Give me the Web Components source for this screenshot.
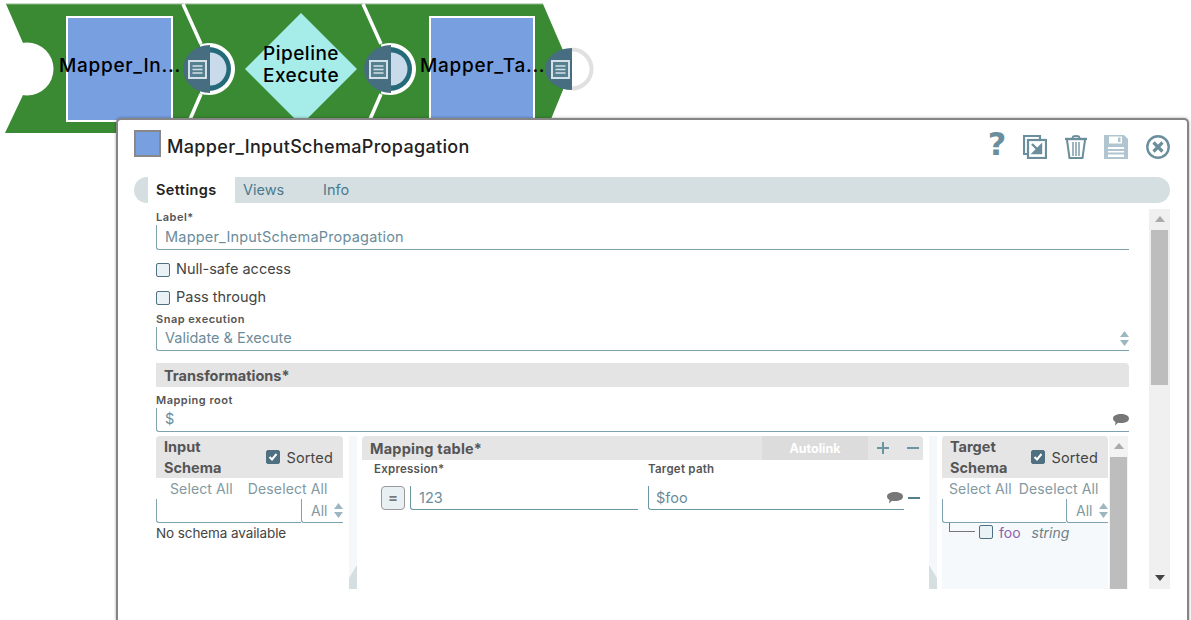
<!DOCTYPE html>
<html>
<head>
<meta charset="utf-8">
<style>
    html, body { margin: 0; padding: 0; height: 620px; overflow: hidden; background: #fff; }
    body { font-family: Inter, "Liberation Sans", sans-serif; position: relative; }
</style>
</head>
<body>
<pipeline-canvas></pipeline-canvas>
<snap-dialog title-text="Mapper_InputSchemaPropagation">
    <form-field label="Label*" value="Mapper_InputSchemaPropagation" style="--control-h:25px;--value-ls:.2px"></form-field>
    <check-row style="margin-top:5px">Null-safe access</check-row>
    <check-row>Pass through</check-row>
    <form-field label="Snap execution" value="Validate &amp; Execute" kind="select"></form-field>
    <section-bar>Transformations*</section-bar>
    <form-field label="Mapping root" value="$" kind="comment" style="--field-mt:5px"></form-field>
    <mapping-area>
        <schema-panel slot="input" name="Input Schema" filter-w="145">
            <div style="font-size:13.5px;color:#444;line-height:20px;letter-spacing:-.1px">No schema available</div>
        </schema-panel>
        <mapping-table slot="table"></mapping-table>
        <schema-panel slot="target" name="Target Schema" filter-w="124" tinted>
            <schema-leaf name="foo" type="string"></schema-leaf>
        </schema-panel>
    </mapping-area>
</snap-dialog>

<script>
const docIcon = (x, y) => `
    <rect x="${x}" y="${y}" width="17" height="17" fill="#55808f" stroke="#d3e0e8" stroke-width="2"/>
    <path d="M${x + 3.5} ${y + 5}h10M${x + 3.5} ${y + 8.5}h10M${x + 3.5} ${y + 12}h10" stroke="#d3e0e8" stroke-width="1.4"/>`;

class PipelineCanvas extends HTMLElement {
    constructor() {
        super();
        this.shadowDOM = this.attachShadow({mode: 'open'});
    }

    connectedCallback() {
        this.shadowDOM.innerHTML = `
            <style>
                :host { display: block; position: absolute; left: 0; top: 0; width: 620px; height: 140px; }
                svg { position: absolute; left: 0; top: 0; }
                .label {
                    position: absolute;
                    color: #000;
                    font-size: 19px;
                    font-weight: 500;
                    line-height: 22px;
                    white-space: nowrap;
                    text-align: center;
                }
            </style>
            <svg width="620" height="140" viewBox="0 0 620 140">
                <path d="M6 4H543L565 55V85L549 124L540 133H5L23 95V43Z" fill="#398a33"/>
                <path d="M6 4H543" stroke="#8fb88c" stroke-width="1"/>
                <circle cx="27" cy="69" r="26.5" fill="#fff"/>
                <path d="M183 4L201 44M201 94L188 124" stroke="#fff" stroke-width="3.5" fill="none"/>
                <path d="M363 4L381 44M381 94L368 124" stroke="#fff" stroke-width="3.5" fill="none"/>

                <rect x="67" y="17" width="105" height="104" fill="#789fe0" stroke="#fff" stroke-width="2"/>
                <rect x="430" y="17" width="104" height="116" fill="#789fe0" stroke="#fff" stroke-width="2"/>
                <path d="M301 13L357 69L301 125L245 69Z" fill="#a6ece8"/>

                <path d="M200 44.600A26 26 0 1 1 200 93.400Z" fill="#fff"/>
                <path d="M209 47A22 22 0 0 1 209 91Z" fill="#256a7a"/>
                <path d="M210 52.500A16.500 16.500 0 0 1 210 85.500Z" fill="#c9dbea"/>
                <path d="M210 45A27 24 0 0 0 210 93Z" fill="#466e80"/>
                ${docIcon(189, 61)}

                <path d="M381 44.600A26 26 0 1 1 381 93.400Z" fill="#fff"/>
                <path d="M390 47A22 22 0 0 1 390 91Z" fill="#256a7a"/>
                <path d="M391 52.500A16.500 16.500 0 0 1 391 85.500Z" fill="#c9dbea"/>
                <path d="M391 45A27 24 0 0 0 391 93Z" fill="#466e80"/>
                ${docIcon(370, 61)}

                <path d="M572 49.500A19.500 19.500 0 0 1 572 88.500" fill="none" stroke="#e0e0e0" stroke-width="4"/>
                <path d="M572 48A27 21 0 0 0 572 90Z" fill="#466e80"/>
                ${docIcon(552, 61)}
            </svg>
            <div class="label" style="left:59px;top:55px;letter-spacing:.7px">Mapper_In...</div>
            <div class="label" style="left:245px;top:43px;width:112px;letter-spacing:.5px">Pipeline<br>Execute</div>
            <div class="label" style="left:420px;top:55px;letter-spacing:.7px">Mapper_Ta...</div>
        `;
    }
}

class SnapDialog extends HTMLElement {
    constructor() {
        super();
        this.shadowDOM = this.attachShadow({mode: 'open'});
    }

    connectedCallback() {
        this.shadowDOM.innerHTML = `
            <style>
                :host {
                    display: block;
                    position: absolute;
                    left: 116px;
                    top: 118px;
                    width: 1073px;
                    height: 520px;
                    box-sizing: border-box;
                    background: #fff;
                    border: 2px solid #858585;
                    border-radius: 5px;
                    box-shadow: 0 0 3px rgba(0, 0, 0, .35);
                }
                .head {
                    display: flex;
                    align-items: flex-start;
                    height: 57px;
                    padding: 0 17px 0 16px;
                    box-sizing: border-box;
                }
                .swatch {
                    width: 27px;
                    height: 27px;
                    box-sizing: border-box;
                    background: #789fe0;
                    border: 2px solid #888;
                    margin: 10px 6px 0 0;
                }
                .title { font-size: 18px; line-height: 22px; font-weight: 500; color: #222; flex: 1; letter-spacing: .33px; margin-top: 16px; }
                .tools { display: flex; align-items: center; gap: 18px; margin-top: 14px; }
                .help { font: bold 32px/1 "DejaVu Sans", sans-serif; color: #6a8e9c; width: 24px; text-align: center; margin-right: -4px; margin-top: -6px; }
                .tools svg { display: block; }
                .tools .trash { margin-right: -1px; }
                .tabs {
                    display: flex;
                    align-items: stretch;
                    height: 26px;
                    margin: 0 17px 0 16px;
                    padding-left: 14px;
                    background: #d5dfe2;
                    border-radius: 13px;
                    font-size: 14.500px;
                    line-height: 25px;
                    color: #4b7a8d;
                }
                .tab { padding: 0 8px; }
                .tab.on { background: #fff; color: #222; font-weight: 600; letter-spacing: .4px; width: 71px; }
                .tab.views { width: 56px; margin-right: 8px; }
                .body {
                    display: grid;
                    grid-template-columns: 973px 21px;
                    column-gap: 20px;
                    height: 380px;
                    margin: 6px 17px 0 38px;
                    overflow: hidden;
                }
                .form { display: flex; flex-direction: column; min-width: 0; }
            </style>
            <div class="head">
                <div class="swatch"></div>
                <div class="title">${this.getAttribute('title-text')}</div>
                <div class="tools">
                    <div class="help">?</div>
                    <svg width="24" height="24" viewBox="0 0 24 24" fill="none" stroke="#6a8e9c" stroke-width="2.200">
                        <path d="M17 4V1H1V19H4"/>
                        <rect x="5" y="5" width="18" height="18"/>
                        <path d="M9 9L18 18M18 10.500V18H10.500Z" stroke-width="2.400" fill="#6a8e9c"/>
                    </svg>
                    <svg class="trash" width="22" height="24" viewBox="0 0 22 24" fill="none" stroke="#6a8e9c" stroke-width="2">
                        <path d="M0 4H22" stroke-width="2.400"/>
                        <path d="M7.500 3.500C7.500 1 8.500 1 11 1S14.500 1 14.500 3.500"/>
                        <path d="M2 5L4.500 23H17.500L20 5"/>
                        <path d="M8 7V21M11 7V21M14 7V21" stroke-width="1.300"/>
                    </svg>
                    <svg width="24" height="24" viewBox="0 0 24 24">
                        <path d="M0 0H20L24 4V24H0Z" fill="#b0c5cf"/>
                        <rect x="5" y="1.500" width="13" height="7" fill="#fff"/>
                        <rect x="14" y="2.500" width="2.500" height="4.500" fill="#b0c5cf"/>
                        <rect x="4" y="12" width="16" height="10" fill="#fff"/>
                        <path d="M4 15H20M4 18.500H20" stroke="#b0c5cf" stroke-width="1.800"/>
                    </svg>
                    <svg width="24" height="24" viewBox="0 0 24 24" fill="none" stroke="#6a8e9c">
                        <circle cx="12" cy="12" r="10.700" stroke-width="2.400"/>
                        <path d="M7.500 7.500L16.500 16.500M16.500 7.500L7.500 16.500" stroke-width="3.200"/>
                    </svg>
                </div>
            </div>
            <div class="tabs">
                <div class="tab on">Settings</div>
                <div class="tab views">Views</div>
                <div class="tab">Info</div>
            </div>
            <div class="body">
                <div class="form"><slot></slot></div>
                <scroll-bar thumb-top="21" thumb-h="155" width="21" pad="2"></scroll-bar>
            </div>
        `;
    }
}

class FormField extends HTMLElement {
    constructor() {
        super();
        this.shadowDOM = this.attachShadow({mode: 'open'});
    }

    connectedCallback() {
        const kind = this.getAttribute('kind');
        let extra = '';
        if (kind === 'select') {
            extra = `<svg class="end" width="9" height="15" viewBox="0 0 9 15" fill="#9db7c1"><path d="M4.500 0L9 6H0ZM0 9H9L4.500 15Z"/></svg>`;
        } else if (kind === 'comment') {
            extra = `<comment-icon class="end"></comment-icon>`;
        }
        this.shadowDOM.innerHTML = `
            <style>
                :host { display: block; margin-top: var(--field-mt, 0); }
                .lab { font-size: 11px; font-weight: 600; letter-spacing: .5px; color: #555; height: 16px; line-height: 16px; }
                .ctl {
                    display: flex;
                    align-items: center;
                    justify-content: space-between;
                    height: var(--control-h, 24px);
                    box-sizing: border-box;
                    padding: 0 0 2px 8px;
                    border-left: 1px solid #7ea3b0;
                    border-bottom: 1px solid #7ea3b0;
                    border-bottom-left-radius: 3px;
                    font-size: 14.500px;
                    letter-spacing: var(--value-ls, 0);
                    color: #6b8c9b;
                }
                .end { margin-top: 2px; }
            </style>
            <div class="lab">${this.getAttribute('label')}</div>
            <div class="ctl"><span>${this.getAttribute('value').replace('&', '&amp;')}</span>${extra}</div>
        `;
    }
}

class CommentIcon extends HTMLElement {
    constructor() {
        super();
        this.attachShadow({mode: 'open'}).innerHTML = `
            <style>:host { display: inline-block; width: 16px; height: 14px; } svg { display: block; }</style>
            <svg width="16" height="14" viewBox="0 0 16 14" fill="#777"><path d="M8 1C12.200 1 16 2.500 16 5.500S12.500 10 8 10C7 10 6 10 5 9.800L2 12.500L2.500 9C1 8.300 0 7 0 5.500C0 2.500 3.800 1 8 1Z"/></svg>
        `;
    }
}

class TickBox extends HTMLElement {
    constructor() {
        super();
        const on = this.hasAttribute('checked');
        this.attachShadow({mode: 'open'}).innerHTML = `
            <style>
                :host { display: block; width: 14px; height: 14px; flex: none; }
                .b {
                    width: 14px;
                    height: 14px;
                    box-sizing: border-box;
                    border: 1px solid #4f7080;
                    border-radius: 2px;
                    background: ${on ? '#4f7080' : '#eaf2f5'};
                }
                svg { display: block; }
            </style>
            <div class="b">${on ? '<svg width="12" height="12" viewBox="0 0 12 12" fill="none" stroke="#fff" stroke-width="2"><path d="M2.500 6L5 8.500L9.500 3"/></svg>' : ''}</div>
        `;
    }
}

class CheckRow extends HTMLElement {
    constructor() {
        super();
        this.attachShadow({mode: 'open'}).innerHTML = `
            <style>
                :host { display: flex; align-items: center; gap: 6px; height: 28px; font-size: 14.500px; color: #444; }
                tick-box { margin-top: 2px; }
                span { padding-bottom: 2px; }
            </style>
            <tick-box></tick-box><span><slot></slot></span>
        `;
    }
}

class SectionBar extends HTMLElement {
    constructor() {
        super();
        this.attachShadow({mode: 'open'}).innerHTML = `
            <style>
                :host {
                    display: block;
                    margin-top: 12px;
                    height: 24px;
                    padding-left: 8px;
                    background: #e4e4e4;
                    border-top-right-radius: 4px;
                    font-size: 14.500px;
                    font-weight: 700;
                    line-height: 25px;
                    color: #555;
                }
            </style>
            <slot></slot>
        `;
    }
}

class MappingArea extends HTMLElement {
    constructor() {
        super();
        this.attachShadow({mode: 'open'}).innerHTML = `
            <style>
                :host {
                    display: grid;
                    grid-template-columns: 187px 19px 561px 19px 187px;
                    width: 973px;
                    height: 153px;
                    margin-top: 4px;
                    overflow: hidden;
                }
                .split { position: relative; margin: 0 5px 0 6px; background: #f4f8fa; }
                .split svg { position: absolute; bottom: 0; display: block; }
            </style>
            <slot name="input"></slot>
            <div class="split"><svg style="left:0" width="8" height="24" viewBox="0 0 8 24" fill="#d5dfe2"><path d="M8 0V24H0V13Z"/></svg></div>
            <slot name="table"></slot>
            <div class="split"><svg style="left:0" width="8" height="24" viewBox="0 0 8 24" fill="#d5dfe2"><path d="M0 0V24H8V13Z"/></svg></div>
            <slot name="target"></slot>
        `;
    }
}

class SchemaPanel extends HTMLElement {
    constructor() {
        super();
        this.shadowDOM = this.attachShadow({mode: 'open'});
    }

    connectedCallback() {
        const tinted = this.hasAttribute('tinted');
        const [first, second] = this.getAttribute('name').split(' ');
        const w = tinted ? 166 : 187;
        const scroller = tinted ? '<scroll-bar thumb-top="21" thumb-h="140" width="19" pad="1" inner></scroll-bar>' : '';
        this.shadowDOM.innerHTML = `
            <style>
                :host { display: flex; height: 153px; }
                .col { width: ${w}px; flex: none; display: flex; flex-direction: column; background: ${tinted ? '#f5f9fb' : '#fff'}; }
                .head {
                    display: flex;
                    align-items: center;
                    justify-content: space-between;
                    height: 42px;
                    padding: 0 10px 0 8px;
                    background: #e5e5e5;
                    border-radius: 4px 4px 0 0;
                    font-size: 14.500px;
                    color: #444;
                }
                .name { font-weight: 700; line-height: 21px; color: #555; }
                .sort { display: flex; align-items: center; gap: 6px; letter-spacing: .15px; }
                .links {
                    display: flex;
                    justify-content: flex-start;
                    gap: ${tinted ? '7px' : '15px'};
                    height: 21px;
                    line-height: 22px;
                    padding: 0 ${tinted ? '7px' : '14px'};
                    font-size: 14px;
                    letter-spacing: .12px;
                    white-space: nowrap;
                    color: #82999f;
                    background: #fff;
                }
                .filter { display: flex; height: 24px; flex: none; background: #fff; }
                .filter div { box-sizing: border-box; border-left: 1px solid #7ea3b0; border-bottom: 1px solid #7ea3b0; border-bottom-left-radius: 3px; }
                .q { width: ${this.getAttribute('filter-w')}px; }
                .all { flex: 1; display: flex; align-items: center; justify-content: space-between; padding: 0 0 0 9px; font-size: 14px; color: #82999f; overflow: hidden; }
                .all svg { flex: none; }
                .tree { flex: 1; background: ${tinted ? '#f5f9fb' : '#fff'}; }
            </style>
            <div class="col">
                <div class="head">
                    <div class="name">${first}<br>${second}</div>
                    <div class="sort"><tick-box checked></tick-box><span>Sorted</span></div>
                </div>
                <div class="links"><span>Select All</span><span>Deselect All</span></div>
                <div class="filter">
                    <div class="q"></div>
                    <div class="all"><span>All</span><svg width="9" height="15" viewBox="0 0 9 15" fill="#9db7c1"><path d="M4.500 0L9 6H0ZM0 9H9L4.500 15Z"/></svg></div>
                </div>
                <div class="tree"><slot></slot></div>
            </div>
            ${scroller}
        `;
    }
}

class SchemaLeaf extends HTMLElement {
    constructor() {
        super();
        this.shadowDOM = this.attachShadow({mode: 'open'});
    }

    connectedCallback() {
        this.shadowDOM.innerHTML = `
            <style>
                :host { display: flex; align-items: center; height: 18px; font-size: 14px; }
                .stub { align-self: flex-start; width: 26px; height: 9px; margin: 0 4px 0 7px; box-sizing: border-box; border-left: 1px solid #777; border-bottom: 1px solid #777; flex: none; }
                .n { color: #8e5fb0; margin-left: 6px; padding-top: 1px; }
                .t { color: #6f7f88; font-style: italic; margin-left: 11px; padding-top: 1px; }
            </style>
            <span class="stub"></span><tick-box></tick-box>
            <span class="n">${this.getAttribute('name')}</span>
            <span class="t">${this.getAttribute('type')}</span>
        `;
    }
}

class MappingTable extends HTMLElement {
    constructor() {
        super();
        this.attachShadow({mode: 'open'}).innerHTML = `
            <style>
                :host { display: block; height: 153px; }
                .head {
                    display: flex;
                    align-items: center;
                    height: 24px;
                    padding-left: 8px;
                    background: #e5e5e5;
                    border-radius: 4px 4px 0 0;
                    font-size: 14.500px;
                    font-weight: 700;
                    color: #555;
                }
                .name { flex: 1; letter-spacing: .2px; }
                .auto {
                    width: 106px;
                    height: 24px;
                    background: #dcdcdc;
                    color: #fff;
                    font-size: 12.500px;
                    line-height: 26px;
                    text-align: center;
                }
                .act { width: 30px; flex: none; display: flex; justify-content: center; }
                .act:last-child { margin-right: -5px; }
                .act svg { display: block; }
                .cols { display: grid; grid-template-columns: 274px 276px; padding-left: 12px; }
                .lab { height: 17px; line-height: 18px; font-size: 11.500px; font-weight: 600; letter-spacing: .25px; color: #555; }
                .expr { display: flex; align-items: flex-start; gap: 5px; padding-left: 7px; margin-top: 9px; }
                .eq {
                    width: 24px;
                    height: 24px;
                    box-sizing: border-box;
                    border: 1px solid #999;
                    border-radius: 4px;
                    background: #e8f0f4;
                    color: #777;
                    font-size: 15px;
                    font-weight: 600;
                    line-height: 21px;
                    text-align: center;
                    flex: none;
                }
                .inp {
                    display: flex;
                    align-items: center;
                    justify-content: space-between;
                    height: 24px;
                    box-sizing: border-box;
                    padding: 0 1px 0 8px;
                    border-left: 1px solid #6b97a5;
                    border-bottom: 1px solid #6b97a5;
                    border-bottom-left-radius: 3px;
                    font-size: 14.500px;
                    color: #6b8c9b;
                }
                .wide { width: 228px; }
                .path { display: flex; align-items: center; margin-top: 9px; }
                .path .inp { width: 256px; padding-left: 7px; }
                .del { width: 12px; height: 2px; background: #557f8f; margin-left: 4px; }
            </style>
            <div class="head">
                <span class="name">Mapping table*</span>
                <span class="auto">Autolink</span>
                <span class="act"><svg width="14" height="14" viewBox="0 0 14 14" stroke="#6a95a5" stroke-width="2"><path d="M7 1V13M1 7H13"/></svg></span>
                <span class="act"><svg width="14" height="14" viewBox="0 0 14 14" stroke="#6a95a5" stroke-width="2"><path d="M1 7H13"/></svg></span>
            </div>
            <div class="cols">
                <div>
                    <div class="lab">Expression*</div>
                    <div class="expr"><div class="eq">=</div><div class="inp wide">123</div></div>
                </div>
                <div>
                    <div class="lab">Target path</div>
                    <div class="path"><div class="inp"><span>$foo</span><comment-icon></comment-icon></div><div class="del"></div></div>
                </div>
            </div>
        `;
    }
}

class ScrollBar extends HTMLElement {
    constructor() {
        super();
        this.shadowDOM = this.attachShadow({mode: 'open'});
    }

    connectedCallback() {
        const w = this.getAttribute('width');
        const pad = this.getAttribute('pad');
        const inner = this.hasAttribute('inner');
        this.shadowDOM.innerHTML = `
            <style>
                :host { display: flex; flex-direction: column; flex: none; width: ${w}px; margin-left: ${inner ? 1 : 0}px; height: ${inner ? 153 : 380}px; background: ${inner ? '#f3f3f3' : '#f0f0f0'}; padding: 0 ${pad}px; box-sizing: border-box; position: relative; }
                .thumb { height: ${this.getAttribute('thumb-h')}px; margin-top: ${this.getAttribute('thumb-top')}px; background: #bdbdbd; flex: none; }
                svg { position: absolute; left: 50%; margin-left: -5px; }
                .up { top: 7px; }
                .down { bottom: 8px; }
            </style>
            <svg class="up" width="10" height="6" viewBox="0 0 10 6" fill="#aaa"><path d="M5 0L10 6H0Z"/></svg>
            <div class="thumb"></div>
            ${inner ? '' : '<svg class="down" width="10" height="6" viewBox="0 0 10 6" fill="#444"><path d="M0 0H10L5 6Z"/></svg>'}
        `;
    }
}

customElements.define('comment-icon', CommentIcon);
customElements.define('tick-box', TickBox);
customElements.define('scroll-bar', ScrollBar);
customElements.define('pipeline-canvas', PipelineCanvas);
customElements.define('form-field', FormField);
customElements.define('check-row', CheckRow);
customElements.define('section-bar', SectionBar);
customElements.define('schema-leaf', SchemaLeaf);
customElements.define('schema-panel', SchemaPanel);
customElements.define('mapping-table', MappingTable);
customElements.define('mapping-area', MappingArea);
customElements.define('snap-dialog', SnapDialog);
</script>
</body>
</html>
